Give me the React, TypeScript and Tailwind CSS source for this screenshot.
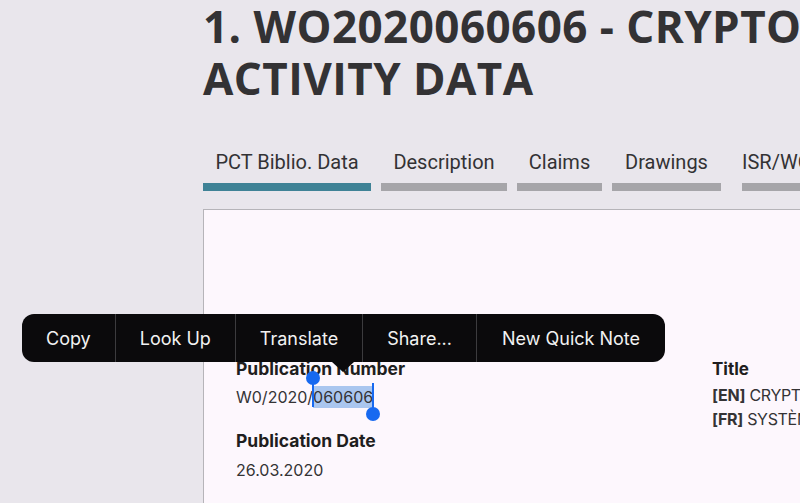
const tabs = [
  { label: 'PCT Biblio. Data', width: 'w-[168px]', active: true },
  { label: 'Description', width: 'w-[126px]', active: false },
  { label: 'Claims', width: 'w-[85px]', active: false },
  { label: 'Drawings', width: 'w-[109px]', active: false },
  { label: 'ISR/WOSA/A.17(2)(a)', width: 'px-[11px]', active: false },
]

const menuItems = ['Copy', 'Look Up', 'Translate', 'Share...', 'New Quick Note']

function ContextMenu() {
  return (
    <div className="absolute left-[22px] top-[314px] flex flex-col items-start">
      <div className="flex h-[48px] items-stretch rounded-[12px] bg-[#0b0a0c] font-['Inter',sans-serif] text-[18px] text-[#f2f2f2]">
        {menuItems.map((item, i) => (
          <div
            key={item}
            className={
              'flex items-center ' +
              (i === menuItems.length - 1 ? 'px-[25px] ' : 'px-[24px] ') +
              (i > 0 ? 'border-l border-[#3c3b3e]' : '')
            }
          >
            {item}
          </div>
        ))}
      </div>
      <div className="ml-[310px] h-0 w-0 border-x-[11px] border-t-[10px] border-x-transparent border-t-[#0b0a0c]" />
    </div>
  )
}

function SelectedNumber() {
  return (
    <span>
      W0/2020/
      <span className="relative bg-[#aac6ef] py-[1px]">
        060606
        <span className="absolute left-[-1px] top-[-8px] h-[29px] w-[2px] bg-[#1769f0]" />
        <span className="absolute left-[-7px] top-[-15px] h-[14px] w-[14px] rounded-full bg-[#1769f0]" />
        <span className="absolute right-[-1px] top-[-3px] h-[31px] w-[2px] bg-[#1769f0]" />
        <span className="absolute right-[-7px] top-[21px] h-[14px] w-[14px] rounded-full bg-[#1769f0]" />
      </span>
    </span>
  )
}

export default function App() {
  return (
    <div className="relative h-[503px] w-[800px] overflow-hidden bg-[#e9e6ec]">
      <div className="pl-[203px]">
        <h1 className="whitespace-nowrap font-['Open_Sans',sans-serif] text-[44px] font-bold leading-[52px] tracking-[0.01em] text-[#333234]">
          1. WO2020060606 - CRYPTOCURRENCY SYSTEM USING BODY
          <br />
          ACTIVITY DATA
        </h1>

        <div className="mt-[46px] flex gap-[10px] whitespace-nowrap">
          {tabs.map((t) => (
            <div key={t.label} className={'flex shrink-0 flex-col items-center ' + t.width}>
              <span className="font-['Roboto',sans-serif] text-[20px] leading-[24px] text-[#333234]">
                {t.label}
              </span>
              <div
                className={
                  'mt-[9px] h-[8px] w-full ' +
                  (t.active ? 'bg-[#3f8296]' : 'bg-[#a6a5a9]')
                }
              />
            </div>
          ))}
        </div>

        <div className="mt-[18px] flex h-[300px] border-l border-t border-[#b6b4b9] bg-[#fdf7fd] pl-[32px] pt-[147px] font-['Inter',sans-serif] text-[#343335]">
          <div className="w-[476px] shrink-0">
            <div className="text-[17.5px] font-bold leading-[24px] text-[#1f1e20]">Publication Number</div>
            <div className="mt-[4px] text-[16px] leading-[24px]">
              <SelectedNumber />
            </div>
            <div className="mt-[20px] text-[17.5px] font-bold leading-[24px] text-[#1f1e20]">Publication Date</div>
            <div className="mt-[5px] text-[16px] leading-[24px]">26.03.2020</div>
          </div>
          <div className="whitespace-nowrap">
            <div className="text-[17px] font-bold leading-[24px] text-[#1f1e20]">Title</div>
            <div className="mt-[2px] text-[16px] leading-[24px] tracking-[-0.02em]">
              <span className="font-bold">[EN]</span> CRYPTOCURRENCY SYSTEM USING BODY ACTIVITY DATA
            </div>
            <div className="text-[16px] leading-[24px] tracking-[-0.02em]">
              <span className="font-bold">[FR]</span> SYSTÈME DE CRYPTOMONNAIE UTILISANT DES DONNÉES D'ACTIVITÉ CORPORELLE
            </div>
          </div>
        </div>
      </div>

      <ContextMenu />
    </div>
  )
}
